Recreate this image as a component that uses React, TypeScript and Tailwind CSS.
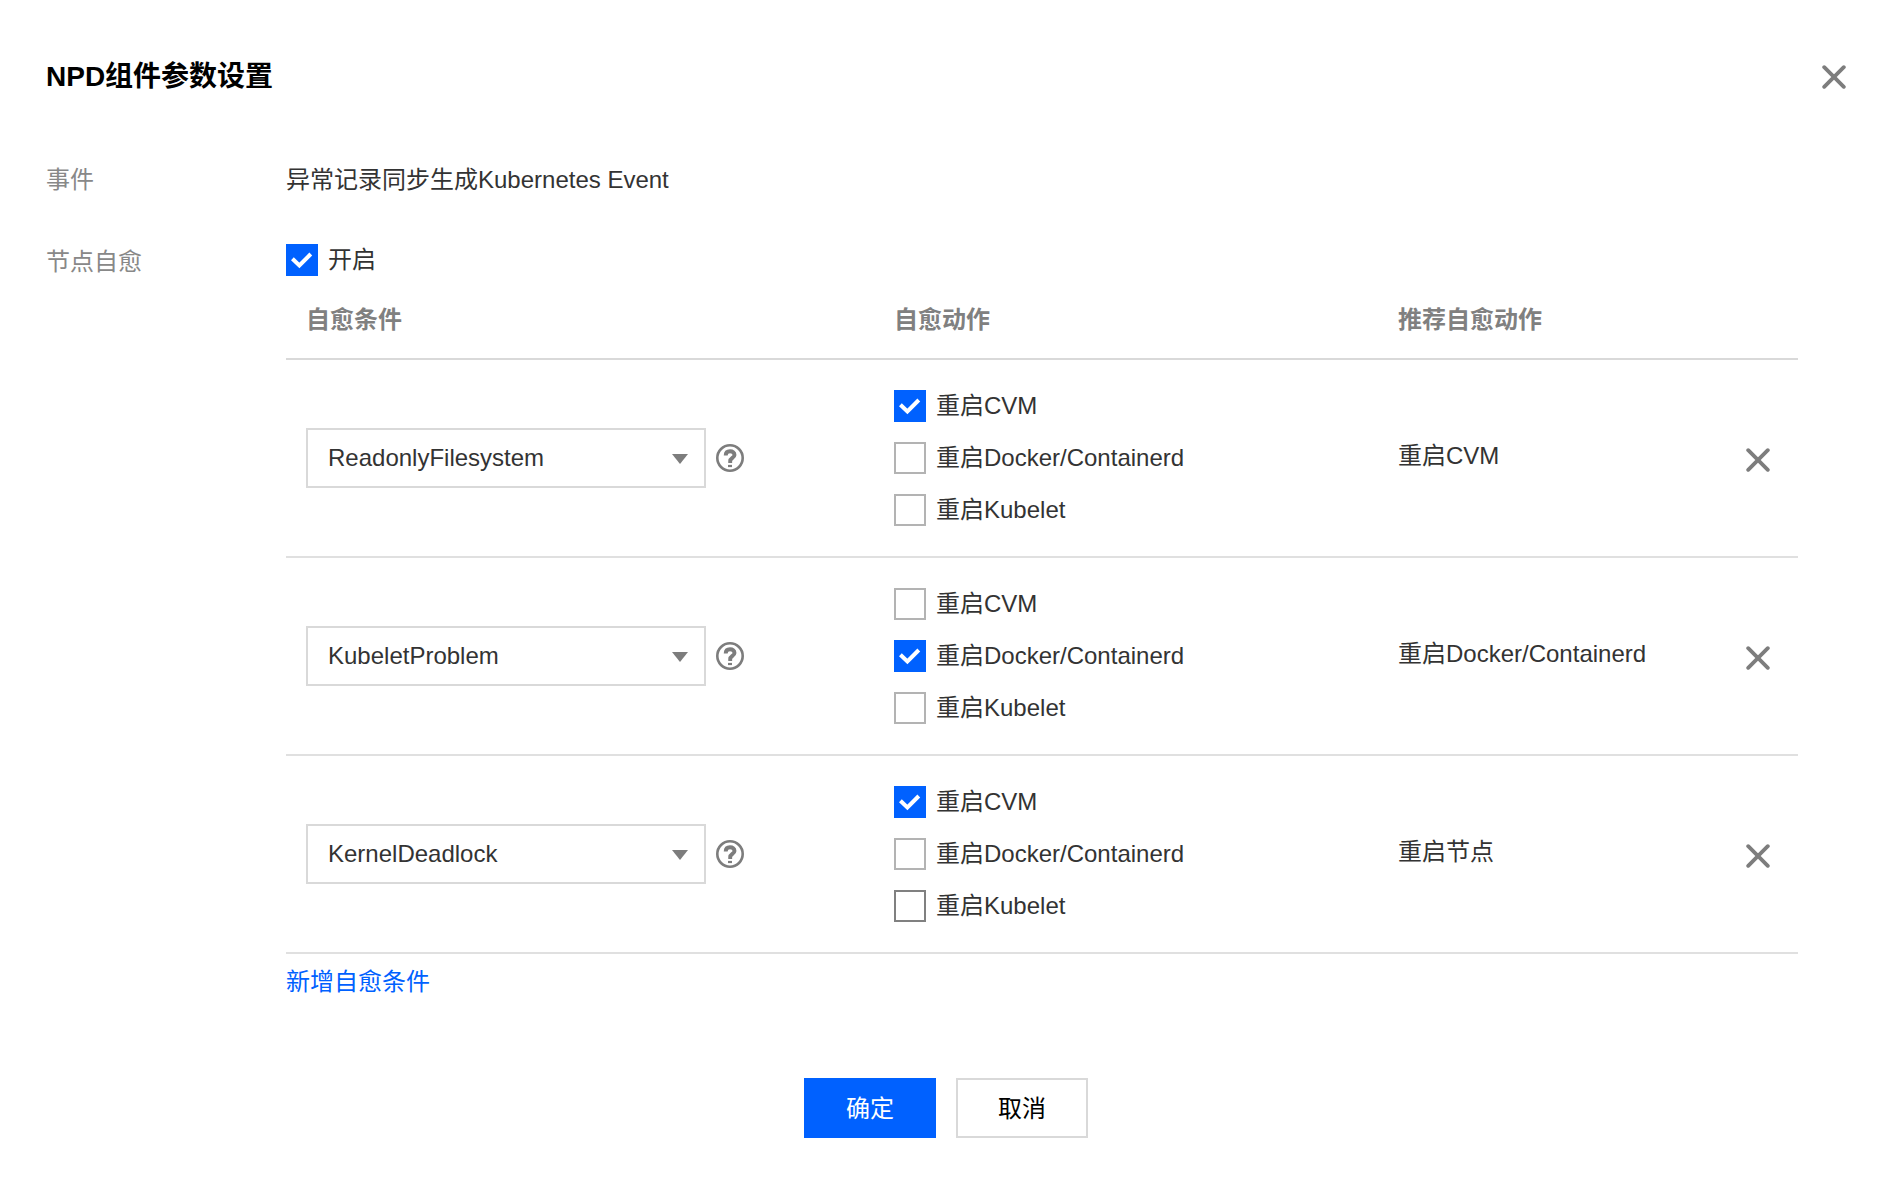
import { useState } from 'react';
import clsx from 'clsx';

const ACTIONS = ['重启CVM', '重启Docker/Containerd', '重启Kubelet'];
const CONDITIONS = ['ReadonlyFilesystem', 'KubeletProblem', 'KernelDeadlock'];

type Rule = {
  id: number;
  condition: string;
  actions: string[];
  recommended: string;
};

const initialRules: Rule[] = [
  { id: 1, condition: 'ReadonlyFilesystem', actions: ['重启CVM'], recommended: '重启CVM' },
  { id: 2, condition: 'KubeletProblem', actions: ['重启Docker/Containerd'], recommended: '重启Docker/Containerd' },
  { id: 3, condition: 'KernelDeadlock', actions: ['重启CVM'], recommended: '重启节点' },
];

function CloseIcon() {
  return (
    <svg viewBox="0 0 24 24" className="w-6 h-6" fill="none" stroke="#7d7d7d" strokeWidth="3.8" strokeLinecap="round">
      <path d="M2.2 2.2L21.8 21.8M21.8 2.2L2.2 21.8" />
    </svg>
  );
}

function HelpIcon() {
  return (
    <svg viewBox="0 0 28 28" className="w-7 h-7" fill="none" stroke="#7d7d7d">
      <circle cx="14" cy="14" r="12.7" strokeWidth="2.6" />
      <path d="M9.7 11.4C9.7 8.8 11.4 7.2 14 7.2C16.7 7.2 18.5 8.7 18.5 10.9C18.5 13.8 14.2 14 14.2 17V19" strokeWidth="3.9" />
      <path d="M12 22H16" strokeWidth="2.2" />
    </svg>
  );
}

type CheckboxProps = {
  label: string;
  checked: boolean;
  active?: boolean;
  onChange: () => void;
};

function Checkbox({ label, checked, active, onChange }: CheckboxProps) {
  return (
    <label className="flex w-fit items-center gap-2.5 leading-8 cursor-pointer">
      <span className="grid shrink-0">
        <input
          type="checkbox"
          checked={checked}
          onChange={onChange}
          className={clsx(
            'col-start-1 row-start-1 w-8 h-8 appearance-none border-2 bg-white checked:bg-[#0061ff] checked:border-[#0061ff]',
            active ? 'border-[#808080]' : 'border-[#b3b3b3]'
          )}
        />
        {checked && (
          <svg viewBox="0 0 32 32" className="col-start-1 row-start-1 w-8 h-8 pointer-events-none" fill="none" stroke="white" strokeWidth="4">
            <path d="M6.4 14.8L13.4 21.5L24.8 10" />
          </svg>
        )}
      </span>
      {label}
    </label>
  );
}

export default function App() {
  const [enabled, setEnabled] = useState(true);
  const [rules, setRules] = useState(initialRules);

  const updateRule = (id: number, patch: Partial<Rule>) =>
    setRules(rules.map((r) => (r.id === id ? { ...r, ...patch } : r)));

  const toggleAction = (rule: Rule, action: string) =>
    updateRule(rule.id, {
      actions: rule.actions.includes(action)
        ? rule.actions.filter((a) => a !== action)
        : [...rule.actions, action],
    });

  const addRule = () =>
    setRules([...rules, { id: Date.now(), condition: CONDITIONS[0], actions: [], recommended: '重启CVM' }]);

  return (
    <div className="min-h-screen bg-white pt-14 pb-11 pl-[46px] pr-10 text-2xl leading-9 text-[#333] font-['Liberation_Sans','Noto_Sans_CJK_SC',sans-serif]">
      {/* Header */}
      <header className="flex items-center justify-between">
        <h1 className="text-[28px] leading-[42px] font-bold text-black">NPD组件参数设置</h1>
        <button type="button" aria-label="关闭">
          <CloseIcon />
        </button>
      </header>

      {/* Form */}
      <div className="mt-16 pr-12 flex flex-col gap-11">
        <div className="flex">
          <div className="w-60 shrink-0 text-[#888]">事件</div>
          <div>异常记录同步生成Kubernetes Event</div>
        </div>

        <div className="flex">
          <div className="w-60 shrink-0 pt-0.5 text-[#888]">节点自愈</div>
          <div className="flex-1 min-w-0">
            <div className="py-0.5">
              <Checkbox label="开启" checked={enabled} onChange={() => setEnabled(!enabled)} />
            </div>

            <table className="w-full table-fixed border-separate border-spacing-0 text-left">
              <thead>
                <tr className="text-[#808080] [&>th]:px-5 [&>th]:pt-6 [&>th]:pb-5 [&>th]:border-b-2 [&>th]:border-[#d9d9d9]">
                  <th className="w-7/18">自愈条件</th>
                  <th className="w-6/18">自愈动作</th>
                  <th>推荐自愈动作</th>
                  <th className="w-20" aria-label="操作"></th>
                </tr>
              </thead>
              <tbody>
                {rules.map((rule) => (
                  <tr key={rule.id} className="[&>td]:px-5 [&>td]:border-b-2 [&>td]:border-[#e0e0e0]">
                    <td>
                      <div className="flex items-center gap-2.5">
                        <div className="relative w-[400px]">
                          <select
                            aria-label="自愈条件"
                            value={rule.condition}
                            onChange={(e) => updateRule(rule.id, { condition: e.target.value })}
                            className="block w-full h-[60px] appearance-none border-2 border-[#d9d9d9] bg-white px-5"
                          >
                            {CONDITIONS.map((c) => (
                              <option key={c}>{c}</option>
                            ))}
                          </select>
                          <svg viewBox="0 0 16 10" className="absolute right-[18px] top-[26px] w-4 h-2.5 pointer-events-none" fill="#7d7d7d">
                            <path d="M0 0H16L8 10Z" />
                          </svg>
                        </div>
                        <button type="button" aria-label="帮助">
                          <HelpIcon />
                        </button>
                      </div>
                    </td>
                    <td className="py-[30px]">
                      <div className="flex flex-col gap-5">
                        {ACTIONS.map((action) => (
                          <Checkbox
                            key={action}
                            label={action}
                            checked={rule.actions.includes(action)}
                            active={rule.id === 3 && action === '重启Kubelet'}
                            onChange={() => toggleAction(rule, action)}
                          />
                        ))}
                      </div>
                    </td>
                    <td className="pb-1">{rule.recommended}</td>
                    <td className="pt-1">
                      <button
                        type="button"
                        aria-label="删除"
                        className="flex w-full justify-center"
                        onClick={() => setRules(rules.filter((r) => r.id !== rule.id))}
                      >
                        <CloseIcon />
                      </button>
                    </td>
                  </tr>
                ))}
              </tbody>
            </table>

            <a
              href="#"
              className="inline-block mt-2.5 text-[#0061ff]"
              onClick={(e) => {
                e.preventDefault();
                addRule();
              }}
            >
              新增自愈条件
            </a>
          </div>
        </div>
      </div>

      {/* Footer buttons */}
      <footer className="mt-[78px] flex justify-center gap-5">
        <button type="button" className="w-[132px] h-[60px] pt-0.5 bg-[#0061ff] text-white">
          确定
        </button>
        <button type="button" className="w-[132px] h-[60px] pt-0.5 border-2 border-[#d9d9d9] bg-white text-black">
          取消
        </button>
      </footer>
    </div>
  );
}
